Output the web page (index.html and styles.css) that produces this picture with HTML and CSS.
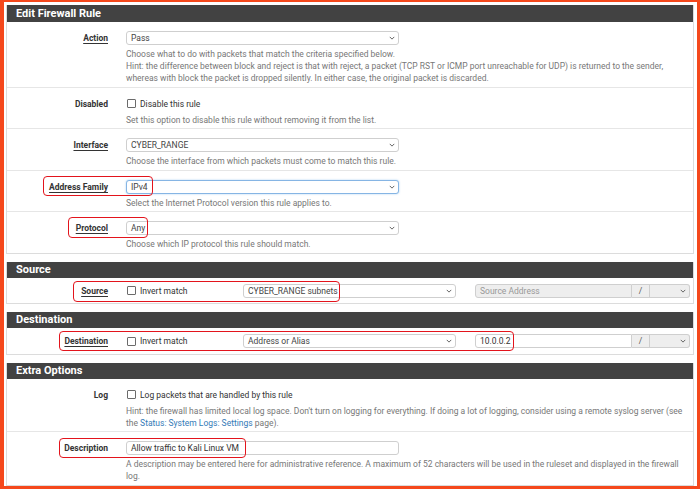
FILE: index.html
```html
<!DOCTYPE html>
<html>
<head>
<meta charset="utf-8">
<link rel="stylesheet" href="styles.css">
</head>
<body>
<div class="frame">
  <section class="panel first">
    <h2 class="panel-heading">Edit Firewall Rule</h2>
    <div class="row">
      <div class="lbl"><span class="req">Action</span></div>
      <div class="ctl">
        <div class="select w273"><span>Pass</span><svg class="chev" viewBox="0 0 8 5"><path d="M1 1l3 3 3-3"/></svg></div>
        <p class="help">Choose what to do with packets that match the criteria specified below.<br>Hint: the difference between block and reject is that with reject, a packet (TCP RST or ICMP port unreachable for UDP) is returned to the sender, whereas with block the packet is dropped silently. In either case, the original packet is discarded.</p>
      </div>
    </div>
    <div class="row">
      <div class="lbl">Disabled</div>
      <div class="ctl">
        <label class="check"><span class="box"></span>Disable this rule</label>
        <p class="help">Set this option to disable this rule without removing it from the list.</p>
      </div>
    </div>
    <div class="row">
      <div class="lbl"><span class="req">Interface</span></div>
      <div class="ctl">
        <div class="select w273"><span>CYBER_RANGE</span><svg class="chev" viewBox="0 0 8 5"><path d="M1 1l3 3 3-3"/></svg></div>
        <p class="help">Choose the interface from which packets must come to match this rule.</p>
      </div>
    </div>
    <div class="row">
      <div class="lbl"><span class="req">Address Family</span></div>
      <div class="ctl">
        <div class="select w273 focus"><span>IPv4</span><svg class="chev" viewBox="0 0 8 5"><path d="M1 1l3 3 3-3"/></svg></div>
        <p class="help">Select the Internet Protocol version this rule applies to.</p>
      </div>
    </div>
    <div class="row">
      <div class="lbl"><span class="req">Protocol</span></div>
      <div class="ctl">
        <div class="select w273"><span>Any</span><svg class="chev" viewBox="0 0 8 5"><path d="M1 1l3 3 3-3"/></svg></div>
        <p class="help">Choose which IP protocol this rule should match.</p>
      </div>
    </div>
  </section>

  <section class="panel">
    <h2 class="panel-heading">Source</h2>
    <div class="row addr">
      <div class="lbl"><span class="req">Source</span></div>
      <div class="ctl line">
        <label class="check inv"><span class="box"></span>Invert match</label>
        <div class="select w213"><span>CYBER_RANGE subnets</span><svg class="chev" viewBox="0 0 8 5"><path d="M1 1l3 3 3-3"/></svg></div>
        <div class="group">
          <div class="input disabled"><span>Source Address</span></div>
          <div class="addon">/</div>
          <div class="select mask disabled"><span></span><svg class="chev" viewBox="0 0 8 5"><path d="M1 1l3 3 3-3"/></svg></div>
        </div>
      </div>
    </div>
  </section>

  <section class="panel">
    <h2 class="panel-heading">Destination</h2>
    <div class="row addr">
      <div class="lbl"><span class="req">Destination</span></div>
      <div class="ctl line">
        <label class="check inv"><span class="box"></span>Invert match</label>
        <div class="select w213"><span>Address or Alias</span><svg class="chev" viewBox="0 0 8 5"><path d="M1 1l3 3 3-3"/></svg></div>
        <div class="group">
          <div class="input"><span class="val">10.0.0.2</span></div>
          <div class="addon">/</div>
          <div class="select mask disabled"><span></span><svg class="chev" viewBox="0 0 8 5"><path d="M1 1l3 3 3-3"/></svg></div>
        </div>
      </div>
    </div>
  </section>

  <section class="panel last">
    <h2 class="panel-heading">Extra Options</h2>
    <div class="row">
      <div class="lbl">Log</div>
      <div class="ctl">
        <label class="check"><span class="box"></span>Log packets that are handled by this rule</label>
        <p class="help">Hint: the firewall has limited local log space. Don't turn on logging for everything. If doing a lot of logging, consider using a remote syslog server (see the <a class="link">Status: System Logs: Settings</a> page).</p>
      </div>
    </div>
    <div class="row">
      <div class="lbl">Description</div>
      <div class="ctl">
        <div class="input w273"><span class="val">Allow traffic to Kali Linux VM</span></div>
        <p class="help">A description may be entered here for administrative reference. A maximum of 52 characters will be used in the ruleset and displayed in the firewall log.</p>
      </div>
    </div>
  </section>
</div>

<div class="mark m-af"></div>
<div class="mark m-proto"></div>
<div class="mark m-src"></div>
<div class="mark m-dst"></div>
<div class="mark m-desc"></div>
</body>
</html>
```

FILE: styles.css
```css
* { box-sizing: border-box; }
html, body { margin: 0; padding: 0; }
body {
  position: relative;
  width: 700px;
  height: 489px;
  overflow: hidden;
  background: #fff;
  font-family: Roboto, "Liberation Sans", sans-serif;
  color: #333;
}
.frame {
  width: 700px;
  height: 489px;
  border-style: solid;
  border-color: #f5481c;
  border-width: 2px 3px 3px 4px;
  padding: 3px 3px 0 2px;
  background: #fff;
  overflow: hidden;
}
.panel {
  border: 1px solid #dcdcdc;
  border-top: 0;
  margin-bottom: 8px;
  background: #fff;
}
.panel.last { margin-bottom: 0; }
.panel-heading {
  margin: 0;
  height: 16px;
  background: #424242;
  color: #fff;
  font-size: 11px;
  font-weight: 700;
  line-height: 16px;
  padding-left: 9px;
}
.first .panel-heading { height: 17px; line-height: 17px; }
.row {
  display: grid;
  grid-template-columns: 101px 1fr;
  column-gap: 18px;
  padding: 9px 0 2.5px;
  border-bottom: 1px solid #e6e6e6;
}
.row:last-child { border-bottom: 0; }
.row.addr { padding: 6px 0 5.5px; }
.lbl {
  text-align: right;
  font-size: 8.5px;
  font-weight: 700;
  line-height: 14px;
  color: #333;
}
.req {
  text-decoration: underline;
  text-underline-offset: 2px;
  text-decoration-thickness: 1px;
}
.ctl { min-width: 0; padding-right: 3px; }
.ctl.line { display: flex; align-items: center; }
.select, .input {
  height: 14px;
  border: 1px solid #cfcfcf;
  border-radius: 3px;
  font-size: 8.5px;
  line-height: 12px;
  color: #444;
  padding-left: 4px;
  display: flex;
  align-items: center;
  justify-content: space-between;
  background: #fff;
}
.w273 { width: 273px; }
.w213 { width: 213px; }
.select.focus {
  border-color: #86b5e4;
  box-shadow: 0 0 2px rgba(102,175,233,0.6);
}
.chev {
  width: 6px;
  height: 4px;
  margin-right: 3px;
  fill: none;
  stroke: #555;
  stroke-width: 1.2;
}
.help {
  margin: 3px 0 0;
  font-size: 8.5px;
  line-height: 12px;
  color: #777;
}
.link { color: #337ab7; }
.check {
  display: flex;
  align-items: center;
  height: 14px;
  font-size: 8.5px;
  color: #333;
}
.box {
  width: 9px;
  height: 9px;
  border: 1px solid #6b6b6b;
  border-radius: 1px;
  margin: 0 4px 0 1px;
  background: #fff;
}
.check.inv { width: 117px; flex: none; }
.line .select.w213 { flex: none; }
.group {
  display: flex;
  margin-left: 19px;
  width: 215px;
  flex: none;
}
.group .input {
  width: 157px;
  border-radius: 3px 0 0 3px;
}
.input.disabled, .select.disabled { background: #eee; color: #999; }
.addon {
  width: 18px;
  height: 14px;
  border: 1px solid #cfcfcf;
  border-left: 0;
  background: #eee;
  font-size: 8.5px;
  line-height: 12px;
  text-align: center;
  color: #555;
}
.select.mask {
  width: 40px;
  border-left: 0;
  border-radius: 0 3px 3px 0;
}
.val { color: #333; }
.mark {
  position: absolute;
  border: 1.5px solid #e3141c;
  border-radius: 4px;
}
.m-af { left: 43px; top: 176px; width: 110px; height: 20px; }
.m-proto { left: 68px; top: 217px; width: 80px; height: 21px; }
.m-src { left: 73px; top: 281px; width: 267px; height: 21px; }
.m-dst { left: 59px; top: 331px; width: 455px; height: 20px; }
.m-desc { left: 59px; top: 438px; width: 187px; height: 20px; }
```
